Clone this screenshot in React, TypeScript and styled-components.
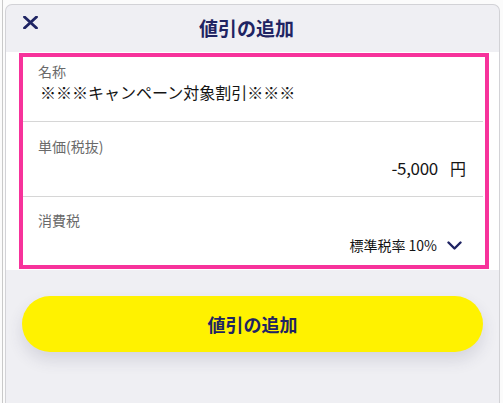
import React from "react";
import styled, { createGlobalStyle } from "styled-components";

const GlobalStyle = createGlobalStyle`
  html, body { margin: 0; padding: 0; background: #fbfbfb; }
  body { font-family: "Noto Sans CJK JP", "Noto Sans", sans-serif; }
  * { box-sizing: border-box; }
`;

const Page = styled.div`
  height: 403px;
  padding: 0 3px 0 2px;
  display: flex;
  overflow: hidden;
`;

const Frame = styled.div`
  flex: 1;
  border-left: 1px solid #c9c9c9;
  padding: 4px 0 0 2px;
  display: flex;
`;

const Panel = styled.div`
  flex: 1;
  display: flex;
  flex-direction: column;
  background: #efeff3;
  border: 1px solid #d2d2d6;
  border-bottom: none;
  border-radius: 7px 7px 0 0;
  overflow: hidden;
`;

const Header = styled.div`
  height: 47px;
  position: relative;
  display: flex;
  align-items: center;
  justify-content: center;
  padding: 0 12px 1px 0;
`;

const CloseButton = styled.button`
  position: absolute;
  left: 16px;
  top: 9px;
  width: 16px;
  height: 16px;
  padding: 0;
  border: none;
  background: transparent;
  display: flex;
  align-items: center;
  justify-content: center;
`;

const Title = styled.h1`
  margin: 0;
  font-size: 19px;
  font-weight: 700;
  color: #1f2463;
  line-height: 24px;
`;

const Card = styled.div`
  background: #ffffff;
  padding: 1px 10px 1px 13px;
`;

const Highlight = styled.div`
  border: 4px solid #f7329b;
  display: flex;
  flex-direction: column;
`;

const Field = styled.div<{ $top: number; $bottom: number; $divider?: boolean }>`
  padding: ${(p) => p.$top}px 0 ${(p) => p.$bottom}px 15px;
  margin-right: 2px;
  border-bottom: ${(p) => (p.$divider ? "1px solid #d6d6d6" : "none")};
  display: flex;
  flex-direction: column;
`;

const Label = styled.div`
  font-size: 14px;
  line-height: 20px;
  color: #6a6a6a;
`;

const Value = styled.div`
  font-size: 16px;
  line-height: 24px;
  color: #141414;
  padding-left: 2px;
  margin-top: -1px;
  margin-bottom: 1px;
`;

const PriceRow = styled.div`
  display: flex;
  justify-content: flex-end;
  align-items: center;
  gap: 12px;
  padding-right: 17px;
  margin-top: 1px;
  font-size: 17px;
  line-height: 22px;
  color: #141414;
`;

const Amount = styled.span`
  letter-spacing: -0.3px;
`;

const Yen = styled.span`
  font-size: 16px;
`;

const SelectRow = styled.div`
  display: flex;
  justify-content: flex-end;
  align-items: center;
  gap: 10px;
  padding-right: 21px;
  margin-top: 5px;
  font-size: 14px;
  line-height: 20px;
  color: #141414;
`;

const Footer = styled.div`
  flex: 1;
  padding: 26px 16px 0 16px;
`;

const SubmitButton = styled.button`
  width: 100%;
  height: 56px;
  border: none;
  border-radius: 28px;
  background: #fff200;
  color: #1f2463;
  font-family: "Noto Sans CJK JP", "Noto Sans", sans-serif;
  font-size: 18px;
  font-weight: 700;
  box-shadow: 0 8px 16px rgba(60, 60, 90, 0.14);
  padding: 0;
`;

export default function App() {
  return (
    <>
      <GlobalStyle />
      <Page>
        <Frame>
          <Panel>
            <Header>
              <CloseButton aria-label="閉じる">
                <svg width="15" height="13" viewBox="0 0 15 13">
                  <path d="M1.5 1 L13.5 12 M13.5 1 L1.5 12" stroke="#1f2463" strokeWidth="2.8" strokeLinecap="round" />
                </svg>
              </CloseButton>
              <Title>値引の追加</Title>
            </Header>
            <Card>
              <Highlight>
                <Field $top={4} $bottom={16} $divider>
                  <Label>名称</Label>
                  <Value>※※※キャンペーン対象割引※※※</Value>
                </Field>
                <Field $top={14} $bottom={17} $divider>
                  <Label>単価(税抜)</Label>
                  <PriceRow>
                    <Amount>-5,000</Amount>
                    <Yen>円</Yen>
                  </PriceRow>
                </Field>
                <Field $top={13} $bottom={10}>
                  <Label>消費税</Label>
                  <SelectRow>
                    <span>標準税率 10%</span>
                    <svg width="15" height="9" viewBox="0 0 15 9">
                      <path d="M1.5 1.5 L7.5 7.5 L13.5 1.5" fill="none" stroke="#1f2463" strokeWidth="2.4" strokeLinecap="round" strokeLinejoin="round" />
                    </svg>
                  </SelectRow>
                </Field>
              </Highlight>
            </Card>
            <Footer>
              <SubmitButton>値引の追加</SubmitButton>
            </Footer>
          </Panel>
        </Frame>
      </Page>
    </>
  );
}
